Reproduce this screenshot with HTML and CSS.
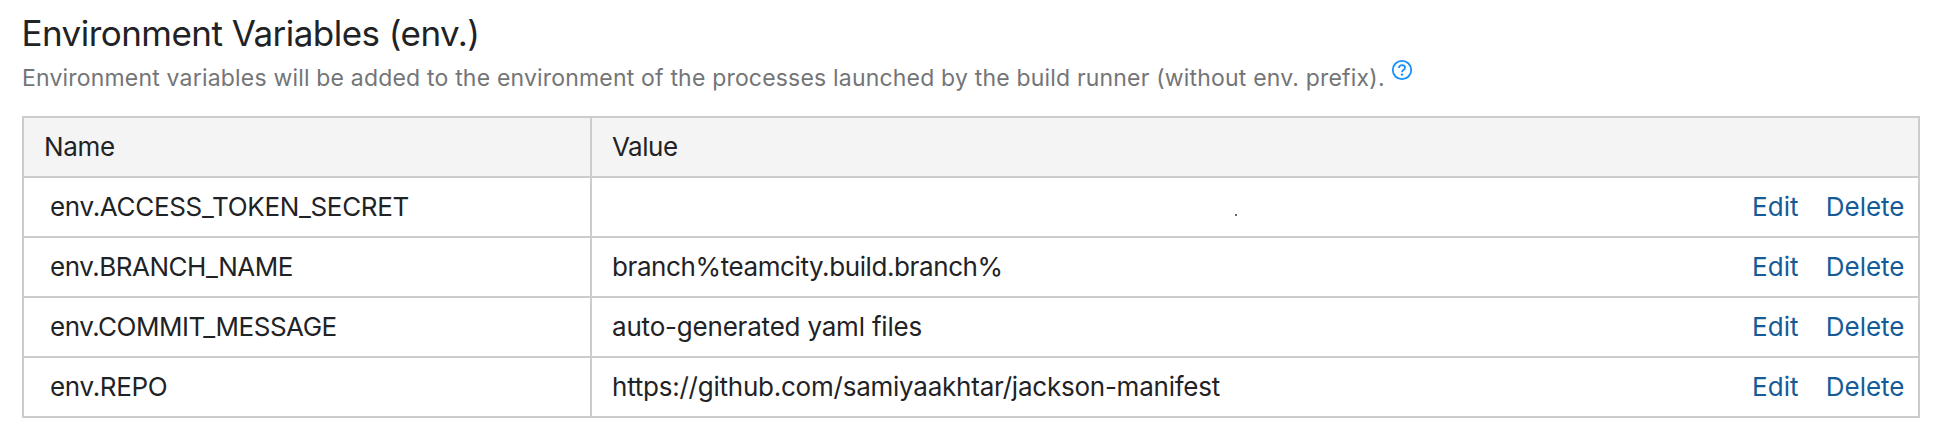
FILE: index.html
```html
<!DOCTYPE html>
<html lang="en">
<head>
<meta charset="utf-8">
<title>Environment Variables</title>
<link rel="stylesheet" href="styles.css">
</head>
<body>
<main class="section">
  <h2 class="title">Environment Variables (env.)</h2>
  <p class="note"><span class="note-text">Environment variables will be added to the environment of the processes launched by the build runner (without env. prefix).</span>
    <svg class="help" width="22" height="22" viewBox="0 0 22 22" fill="none" stroke="currentColor" role="img" aria-label="Help">
      <circle cx="11" cy="11" r="9.2" stroke-width="1.8"/>
      <path d="M8 9.1C8 7.2 9.2 6.2 11 6.2C12.8 6.2 14 7.2 14 8.7C14 9.8 13.4 10.4 12.4 11C11.4 11.6 11 12 11 13.2" stroke-width="1.8"/>
      <circle cx="11" cy="15.6" r="1.2" fill="currentColor" stroke="none"/>
    </svg>
  </p>
  <table class="params">
    <thead>
      <tr><th class="name-col">Name</th><th class="value-col tight-head">Value</th></tr>
    </thead>
    <tbody>
      <tr>
        <td class="name">env.ACCESS_TOKEN_SECRET</td>
        <td class="value"><div class="cell"><span class="masked"><i class="dot"></i></span><span class="actions"><a class="edit">Edit</a><a>Delete</a></span></div></td>
      </tr>
      <tr>
        <td class="name tight">env.BRANCH_NAME</td>
        <td class="value"><div class="cell"><span class="reference">branch%teamcity.build.branch%</span><span class="actions"><a class="edit">Edit</a><a>Delete</a></span></div></td>
      </tr>
      <tr>
        <td class="name tight">env.COMMIT_MESSAGE</td>
        <td class="value"><div class="cell"><span>auto-generated yaml files</span><span class="actions"><a class="edit">Edit</a><a>Delete</a></span></div></td>
      </tr>
      <tr>
        <td class="name">env.REPO</td>
        <td class="value"><div class="cell"><span class="url">https://github.com/samiyaakhtar/jackson-manifest</span><span class="actions"><a class="edit">Edit</a><a>Delete</a></span></div></td>
      </tr>
    </tbody>
  </table>
</main>
</body>
</html>
```

FILE: styles.css
```css
* { box-sizing: border-box; }

body {
  margin: 0;
  background: #fff;
  color: #1f2326;
  font-family: Inter, "Liberation Sans", sans-serif;
  font-size: 26px;
}

.section { padding: 12px 40px 0 22px; }

.title {
  margin: 0 0 10px -0.5px;
  font-size: 35px;
  font-weight: 400;
  line-height: 42px;
  letter-spacing: -0.54px;
}

.note {
  display: flex;
  gap: 6px;
  height: 28px;
  margin: 0 0 24px;
  color: #737577;
  font-size: 23px;
  line-height: 28px;
  letter-spacing: 0.187px;
  white-space: nowrap;
}

.help { margin-top: -5px; color: #1a8fff; flex: none; }

.params {
  width: 1898px;
  table-layout: fixed;
  border-collapse: separate;
  border-spacing: 0;
  border-top: 2px solid #ccc;
  border-left: 2px solid #ccc;
}

th, td {
  height: 60px;
  padding: 0;
  border-right: 2px solid #ccc;
  border-bottom: 2px solid #ccc;
  font-weight: 400;
  line-height: 58px;
  text-align: left;
  white-space: nowrap;
}

th {
  padding-left: 20px;
  background: #f4f4f4;
  letter-spacing: -0.3px;
}

.name-col { width: 568px; }
.tight-head { letter-spacing: -0.5px; }

.name { padding-left: 26px; letter-spacing: -0.32px; }
.name.tight { letter-spacing: -0.48px; }

.value { padding: 0 13.5px 0 20px; letter-spacing: -0.2px; }
.reference { letter-spacing: -0.4px; }
.url { letter-spacing: -0.235px; }

.cell {
  display: flex;
  justify-content: space-between;
  height: 58px;
}

.masked { display: flex; padding: 36px 0 0 623px; }
.dot { width: 2px; height: 2px; background: #666; }

.actions { display: flex; gap: 27px; letter-spacing: 0; }
.actions a { color: #155b98; }
.edit { letter-spacing: 0.1px; }
```
